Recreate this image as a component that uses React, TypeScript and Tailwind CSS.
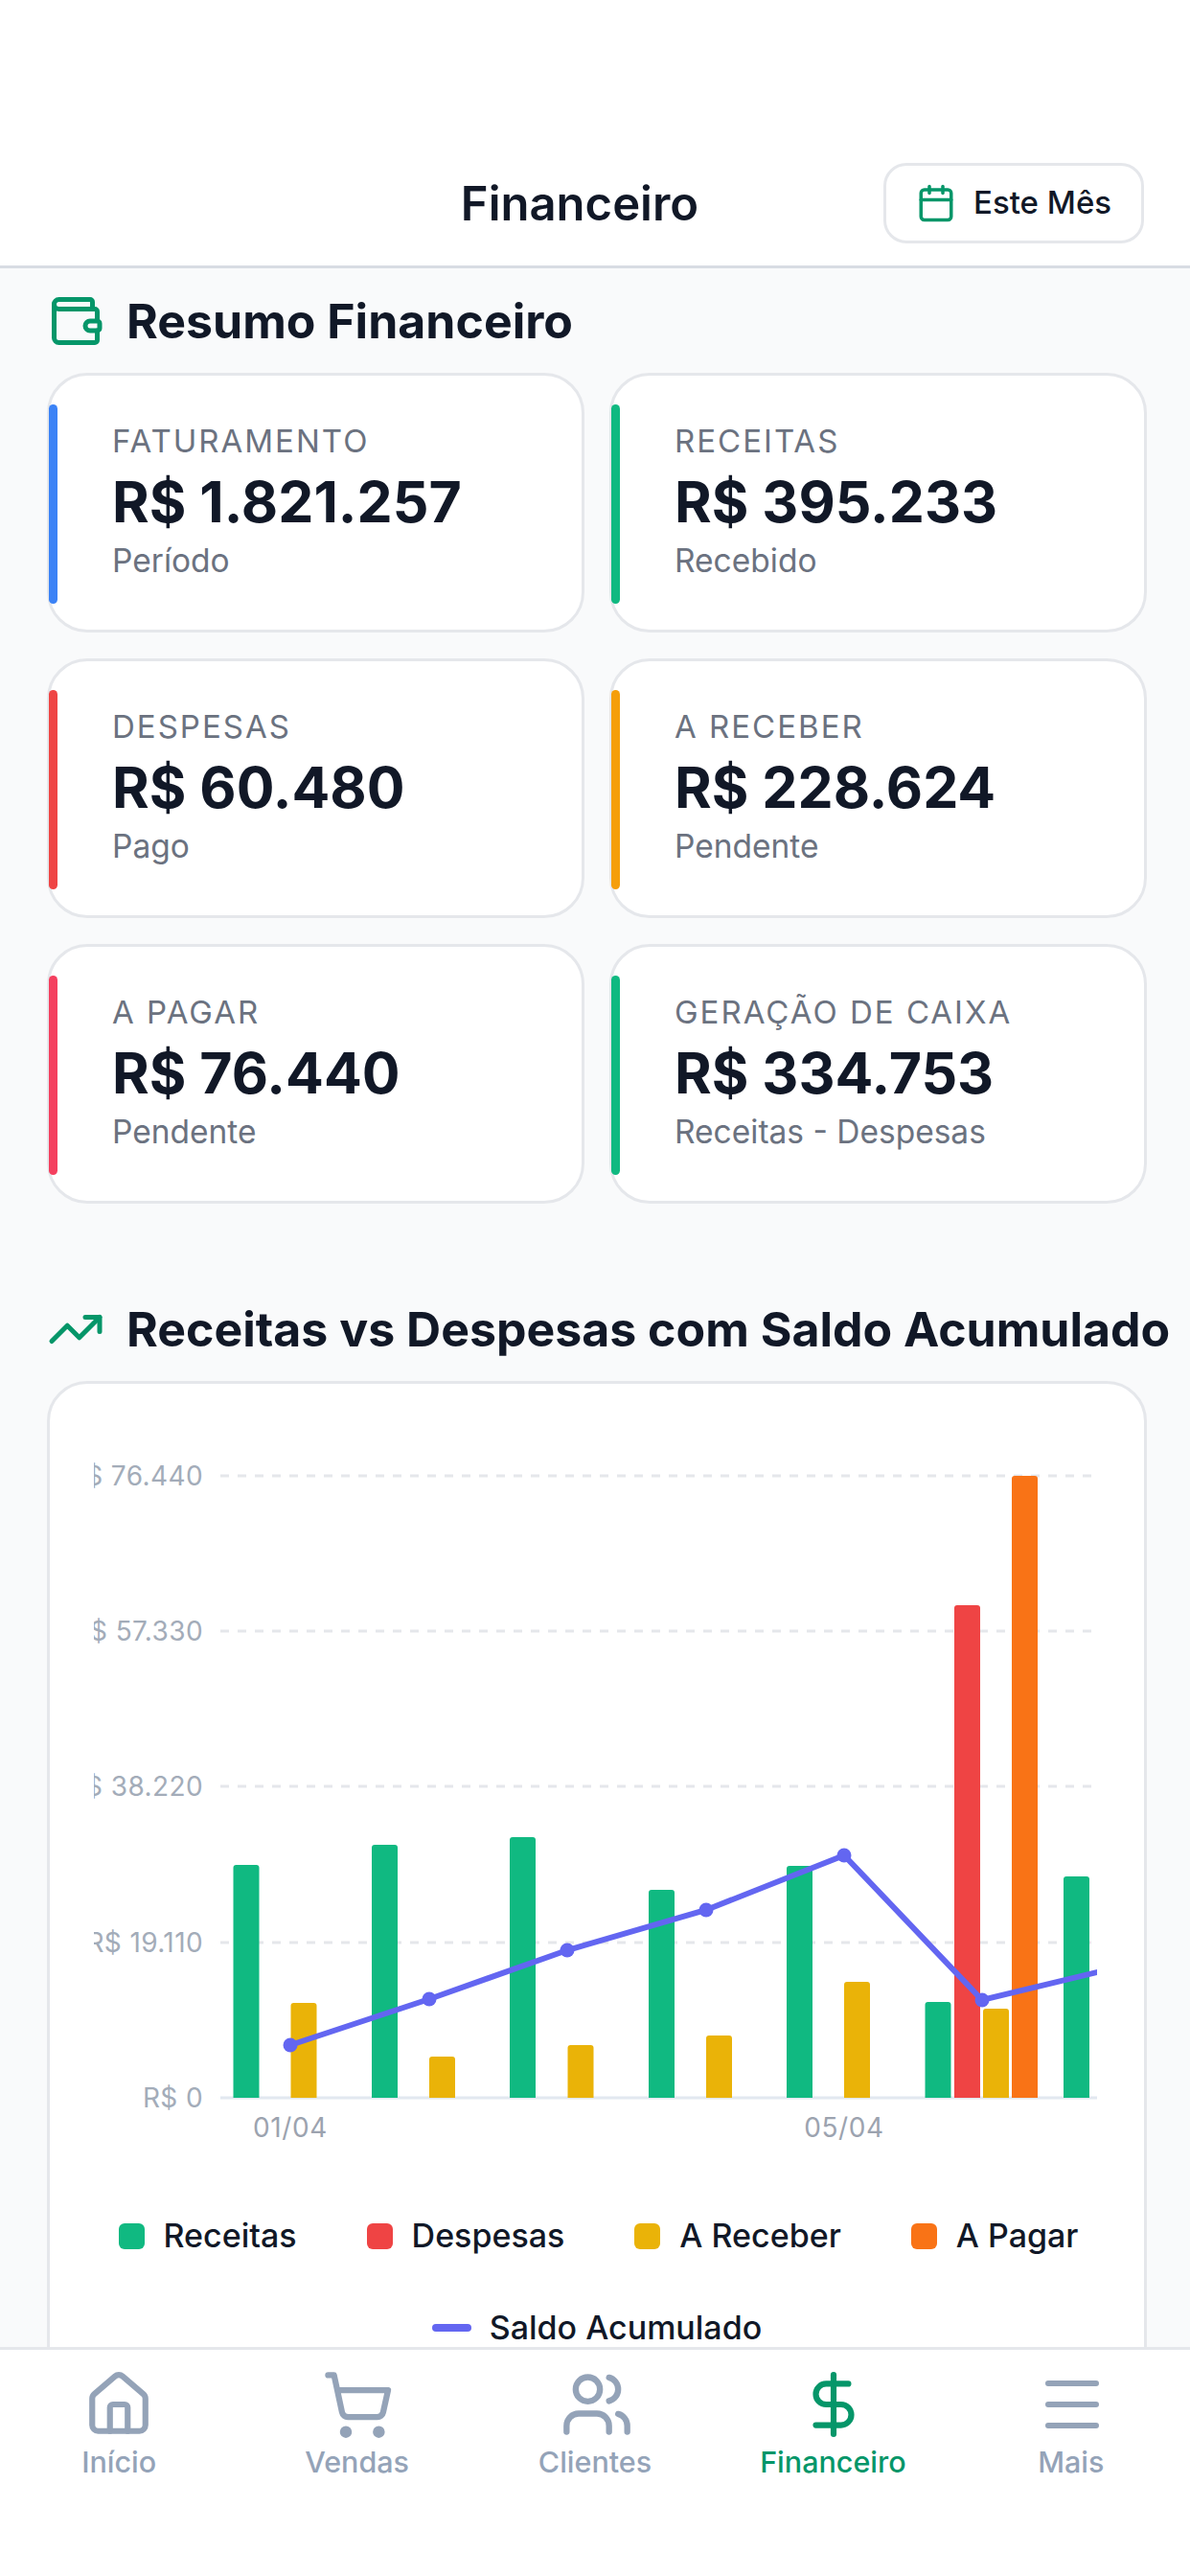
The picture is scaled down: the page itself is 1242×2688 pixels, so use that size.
import { Calendar, DollarSign, House, ShoppingCart, TrendingUp, Users, Wallet } from "lucide-react"

const cards = [
  { label: "FATURAMENTO", value: "R$ 1.821.257", sub: "Período", bar: "bg-[#3b82f6]" },
  { label: "RECEITAS", value: "R$ 395.233", sub: "Recebido", bar: "bg-[#10b981]" },
  { label: "DESPESAS", value: "R$ 60.480", sub: "Pago", bar: "bg-[#ef4444]" },
  { label: "A RECEBER", value: "R$ 228.624", sub: "Pendente", bar: "bg-[#f59e0b]" },
  { label: "A PAGAR", value: "R$ 76.440", sub: "Pendente", bar: "bg-[#f43f5e]" },
  { label: "GERAÇÃO DE CAIXA", value: "R$ 334.753", sub: "Receitas - Despesas", bar: "bg-[#10b981]" },
]

const GREEN = "#10b981"
const RED = "#ef4444"
const YELLOW = "#eab308"
const ORANGE = "#f97316"
const BASE = 2189

// x = left edge, top = y of the bar's top, in page pixels
const bars = [
  { x: 243.5, top: 1946, fill: GREEN },
  { x: 303.5, top: 2090, fill: YELLOW },
  { x: 388, top: 1925, fill: GREEN },
  { x: 448, top: 2146, fill: YELLOW },
  { x: 532, top: 1917, fill: GREEN },
  { x: 592.5, top: 2134, fill: YELLOW },
  { x: 677, top: 1972, fill: GREEN },
  { x: 737, top: 2124, fill: YELLOW },
  { x: 821, top: 1947, fill: GREEN },
  { x: 881, top: 2068, fill: YELLOW },
  { x: 965.5, top: 2089, fill: GREEN },
  { x: 996, top: 1675, fill: RED },
  { x: 1026, top: 2096, fill: YELLOW },
  { x: 1056, top: 1540, fill: ORANGE },
  { x: 1110, top: 1958, fill: GREEN },
]

const dots = [
  [303, 2134],
  [448, 2086],
  [592, 2035],
  [737, 1993],
  [881, 1936],
  [1025, 2087],
]

const yTicks = [
  { y: 1540, label: "R$ 76.440" },
  { y: 1702, label: "R$ 57.330" },
  { y: 1864, label: "R$ 38.220" },
  { y: 2027, label: "R$ 19.110" },
]

const legend = [
  { label: "Receitas", color: "bg-[#10b981]" },
  { label: "Despesas", color: "bg-[#ef4444]" },
  { label: "A Receber", color: "bg-[#eab308]" },
  { label: "A Pagar", color: "bg-[#f97316]" },
]

function Chart() {
  return (
    <svg width="1141" height="720" viewBox="52 1520 1141 720" className="block">
      <defs>
        <clipPath id="labels">
          <rect x="98" y="1500" width="200" height="740" />
        </clipPath>
        <clipPath id="plot">
          <rect x="230" y="1500" width="915" height="700" />
        </clipPath>
      </defs>
      {yTicks.map((t) => (
        <g key={t.y}>
          <line x1="230" x2="1145" y1={t.y} y2={t.y} stroke="#e5e7eb" strokeWidth="3" strokeDasharray="9 9" />
          <text x="212" y={t.y + 10} textAnchor="end" clipPath="url(#labels)" fontSize="28" letterSpacing="0.4" fill="#a3acb9">
            {t.label}
          </text>
        </g>
      ))}
      <text x="212" y={BASE + 10} textAnchor="end" fontSize="28" letterSpacing="0.4" fill="#a3acb9">R$ 0</text>
      <line x1="230" x2="1145" y1={BASE} y2={BASE} stroke="#e2e8f0" strokeWidth="3" />
      {bars.map((b) => (
        <path
          key={b.x}
          d={`M${b.x} ${BASE}V${b.top + 3}q0-3 3-3h21q3 0 3 3V${BASE}z`}
          fill={b.fill}
        />
      ))}
      <g clipPath="url(#plot)">
        <polyline
          points="303,2134 448,2086 592,2035 737,1993 881,1936 1025,2087 1170,2052"
          fill="none"
          stroke="#6366f1"
          strokeWidth="6"
        />
      </g>
      {dots.map(([x, y]) => (
        <circle key={x} cx={x} cy={y} r="7.5" fill="#6366f1" />
      ))}
      <text x="303" y="2230" textAnchor="middle" fontSize="28" letterSpacing="0.6" fill="#9ca3af">01/04</text>
      <text x="881" y="2230" textAnchor="middle" fontSize="28" letterSpacing="0.6" fill="#9ca3af">05/04</text>
    </svg>
  )
}

function NavItem({ label, active, children }: { label: string; active?: boolean; children: React.ReactNode }) {
  return (
    <div className={"flex flex-col items-center " + (active ? "text-[#059669]" : "text-[#94a3b8]")}>
      <div className="flex h-[78px] items-center justify-center">{children}</div>
      <span className="mt-[1px] text-[30.5px] leading-[40px] font-medium">{label}</span>
    </div>
  )
}

export default function App() {
  return (
    <div className="flex h-[2688px] w-[1242px] flex-col overflow-hidden bg-[#f9fafb] font-['Inter',sans-serif] text-[#111827]">
      <header className="flex h-[280px] shrink-0 items-end justify-between border-b-[3px] border-[#d8dce3] bg-white pr-[48px] pl-[50px] pb-[23px]">
        <div className="w-[238px]" />
        <h1 className="pb-[11px] text-[49px] leading-[60px] font-semibold">Financeiro</h1>
        <button className="flex h-[84px] w-[272px] items-center gap-[18px] rounded-[24px] border-[3px] border-[#e5e7eb] bg-white pl-[31px]">
          <Calendar className="size-[42px] text-[#059669]" />
          <span className="text-[33px] font-medium">Este Mês</span>
        </button>
      </header>

      <main className="min-h-0 flex-1 overflow-hidden px-[49px] pt-[25px]">
        <div className="flex items-center gap-[23px]">
          <Wallet className="size-[60px] shrink-0 text-[#059669]" />
          <h2 className="text-[50px] leading-[60px] font-bold whitespace-nowrap">Resumo Financeiro</h2>
        </div>

        <div className="mt-[24px] grid grid-cols-[561px_561px] gap-x-[26px] gap-y-[27px]">
          {cards.map((c) => (
            <div key={c.label} className="relative flex h-[271px] flex-col justify-center rounded-[42px] border-[3px] border-[#e5e7eb] bg-white pb-[5px] pl-[65px]">
              <div className={"absolute top-[30px] left-[-1px] h-[208px] w-[9px] rounded-full " + c.bar} />
              <div className="text-[33px] leading-[40px] tracking-[2px] text-[#6b7280]">{c.label}</div>
              <div className="mt-[9px] text-[59px] leading-[70px] font-bold">{c.value}</div>
              <div className="mt-[6px] text-[33.5px] leading-[40px] text-[#6b7280]">{c.sub}</div>
            </div>
          ))}
        </div>

        <div className="mt-[101px] flex items-center gap-[23px]">
          <TrendingUp className="size-[60px] shrink-0 text-[#059669]" />
          <h2 className="text-[50px] leading-[60px] font-bold whitespace-nowrap">Receitas vs Despesas com Saldo Acumulado</h2>
        </div>

        <div className="mt-[24px] h-[1100px] w-[1148px] rounded-t-[42px] border-[3px] border-[#e5e7eb] bg-white pt-[76px]">
          <Chart />
          <div className="mt-[73px] flex justify-center gap-[73px] pl-[3px]">
            {legend.map((l) => (
              <div key={l.label} className="flex items-center gap-[20px]">
                <span className={"size-[27px] rounded-[6px] " + l.color} />
                <span className="text-[34px] leading-[40px] font-medium">{l.label}</span>
              </div>
            ))}
          </div>
          <div className="mt-[56px] flex items-center justify-center gap-[19px]">
            <span className="h-[8px] w-[41px] rounded-full bg-[#6366f1]" />
            <span className="text-[34px] leading-[40px] font-medium">Saldo Acumulado</span>
          </div>
        </div>
      </main>

      <nav className="grid h-[239px] shrink-0 grid-cols-5 border-t-[3px] border-[#e5e7eb] bg-white pt-[18px]">
        <NavItem label="Início"><House className="size-[74px]" /></NavItem>
        <NavItem label="Vendas"><ShoppingCart className="ml-[2px] size-[75px]" /></NavItem>
        <NavItem label="Clientes"><Users className="ml-[4px] size-[76px]" /></NavItem>
        <NavItem label="Financeiro" active><DollarSign className="ml-[2px] size-[74px]" /></NavItem>
        <NavItem label="Mais">
          <svg className="ml-[3px]" width="74" height="74" viewBox="0 0 74 74" fill="none" stroke="currentColor" strokeWidth="6" strokeLinecap="round">
            <path d="M12 15h50M12 37h50M12 59h50" />
          </svg>
        </NavItem>
      </nav>
    </div>
  )
}
